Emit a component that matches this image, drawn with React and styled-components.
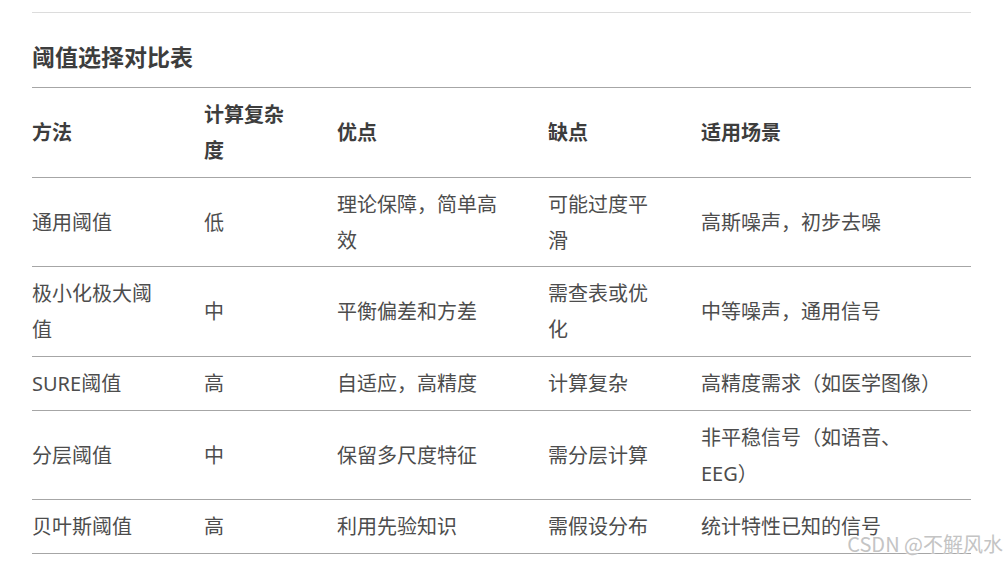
import React from 'react';
import styled, { createGlobalStyle } from 'styled-components';

const GlobalStyle = createGlobalStyle`
  body {
    margin: 0;
    background: #fff;
    font-family: "Noto Sans", "Noto Sans CJK SC", sans-serif;
    color: #4d4d4d;
  }
`;

const Page = styled.div`
  position: relative;
  width: 1007px;
  height: 563px;
  overflow: hidden;
  padding: 12px 0 0 32px;
  box-sizing: border-box;
`;

const Rule = styled.hr`
  width: 939px;
  margin: 0;
  border: none;
  border-top: 1px solid #dcdcdc;
`;

const Title = styled.h3`
  margin: 27px 0 15px;
  font-size: 23px;
  line-height: 32px;
  font-weight: 700;
  color: #3d3d3d;
  font-family: "Noto Sans CJK SC", sans-serif;
`;

const Table = styled.div`
  width: 939px;
  display: grid;
  grid-template-columns: 172px 133px 211px 153px 270px;
  border-top: 1px solid #a6a6a6;
`;

const Cell = styled.div`
  display: flex;
  align-items: center;
  padding: 9px 40px 7.67px 0;
  min-height: 36px;
  line-height: 36px;
  font-size: 20px;
  font-weight: ${(p) => (p.head ? 700 : 400)};
  color: ${(p) => (p.head ? '#3d3d3d' : '#4d4d4d')};
  border-bottom: 1px solid #a6a6a6;
  font-family: "Noto Sans", "Noto Sans CJK SC", sans-serif;
`;

const Watermark = styled.div`
  position: absolute;
  right: 4px;
  bottom: 8px;
  font-size: 20px;
  line-height: 22px;
  color: #c4c4c4;
  text-shadow: 0 0 2px #fff, 0 0 2px #fff;
  font-family: "Noto Sans CJK SC", sans-serif;
`;

const head = ['方法', '计算复杂度', '优点', '缺点', '适用场景'];

const rows = [
  ['通用阈值', '低', '理论保障，简单高效', '可能过度平滑', '高斯噪声，初步去噪'],
  ['极小化极大阈值', '中', '平衡偏差和方差', '需查表或优化', '中等噪声，通用信号'],
  ['SURE阈值', '高', '自适应，高精度', '计算复杂', '高精度需求（如医学图像）'],
  ['分层阈值', '中', '保留多尺度特征', '需分层计算', '非平稳信号（如语音、EEG）'],
  ['贝叶斯阈值', '高', '利用先验知识', '需假设分布', '统计特性已知的信号'],
];

export default function App() {
  return (
    <Page>
      <GlobalStyle />
      <Rule />
      <Title>阈值选择对比表</Title>
      <Table>
        {head.map((h) => (
          <Cell head key={h}>{h}</Cell>
        ))}
        {rows.map((r, i) =>
          r.map((c, j) => <Cell key={`${i}-${j}`}>{c}</Cell>)
        )}
      </Table>
      <Watermark>CSDN @不解风水</Watermark>
    </Page>
  );
}
